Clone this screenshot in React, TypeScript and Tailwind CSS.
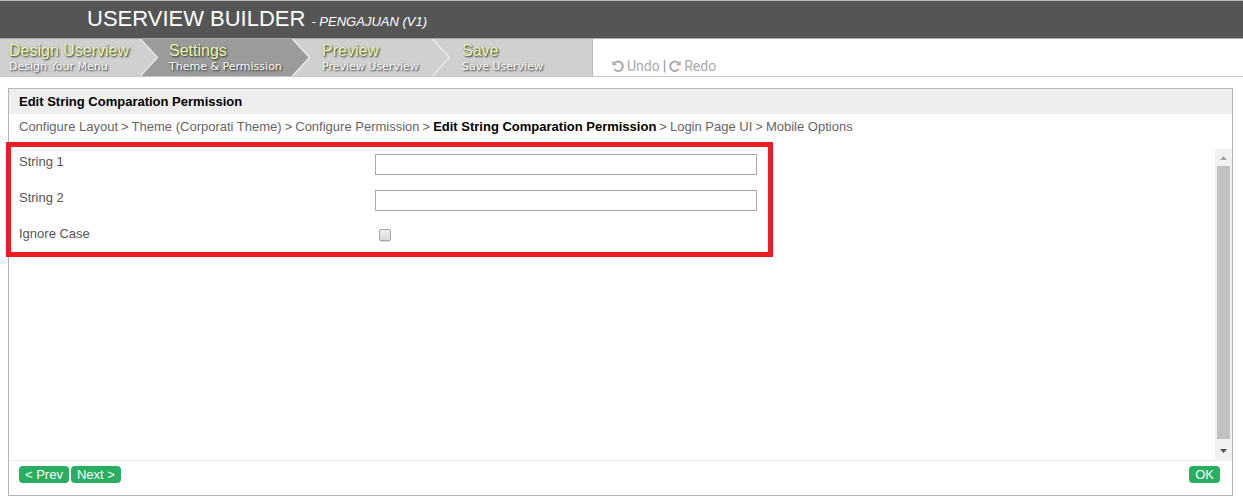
import React from "react";

type Step = { title: string; note: string; size: string; active?: boolean };

const steps: Step[] = [
  { title: "Design Userview", note: "Design Your Menu", size: "w-[140px] pl-[9px]" },
  { title: "Settings", note: "Theme & Permission", size: "w-[152px] pl-[29px]", active: true },
  { title: "Preview", note: "Preview Userview", size: "w-[140px] pl-[30px]" },
  { title: "Save", note: "Save Userview", size: "w-[161px] pl-[30px] border-r border-[#bbb]" },
];

function StepLink({ step, last }: { step: Step; last: boolean }) {
  return (
    <a
      href="#"
      aria-current={step.active ? "step" : undefined}
      className={`relative block h-[37px] shrink-0 pt-[3px] whitespace-nowrap ${step.size} ${
        step.active ? "bg-[#9b9b9b]" : "bg-[#d0d0d0]"
      }`}
    >
      <span className="relative z-20 block text-[16px] leading-[18px] text-[#e8f8a8] [text-shadow:1px_1px_2px_#222]">
        {step.title}
      </span>
      <span className="relative z-20 block font-['DejaVu_Sans',sans-serif] text-[11px] leading-[14px] text-white [text-shadow:1px_1px_2px_#222]">
        {step.note}
      </span>
      {!last && (
        <svg className="absolute top-0 left-full z-10" width="19" height="37" viewBox="0 0 19 37" aria-hidden="true">
          <path d="M0 0 L17 18.5 L0 37 Z" fill={step.active ? "#9b9b9b" : "#d0d0d0"} />
          <path d="M0.5 0 L17.5 18.5 L0.5 37" fill="none" stroke="#ececec" strokeWidth="1.3" />
        </svg>
      )}
    </a>
  );
}

function ArrowIcon({ flip = false }: { flip?: boolean }) {
  return (
    <svg className={flip ? "-scale-x-100" : ""} width="12" height="12" viewBox="0 0 12 12" aria-hidden="true">
      <path d="M2.600 3.200 A4.700 4.700 0 1 1 2.300 9" fill="none" stroke="currentColor" strokeWidth="2" />
      <path d="M0.300 0.700 V5.300 H5 Z" fill="currentColor" />
    </svg>
  );
}

const trail = [
  "Configure Layout",
  "Theme (Corporati Theme)",
  "Configure Permission",
  "Edit String Comparation Permission",
  "Login Page UI",
  "Mobile Options",
];

const buttonStyle = "h-[17px] rounded-[4px] bg-[#27ae60] px-[6px] text-[13px] leading-[17px] text-white";

export default function App() {
  return (
    <div className="flex min-h-screen flex-col bg-white pb-2 font-['Liberation_Sans',Arial,sans-serif] text-[13px] leading-4 text-[#666]">
      <header className="flex h-[39px] items-baseline gap-[6px] border-t border-b border-t-[#bbb] border-b-[#aaa] bg-[#555] pt-1 pl-[87px] text-white">
        <h1 className="text-[22px] leading-[28px]">USERVIEW BUILDER</h1>
        <em className="text-[13px]">- PENGAJUAN (V1)</em>
      </header>

      <div className="flex h-[38px] border-b border-[#c6c6c6]">
        <nav aria-label="Builder steps" className="flex">
          {steps.map((step, i) => (
            <StepLink key={step.title} step={step} last={i === steps.length - 1} />
          ))}
        </nav>
        <div className="flex items-end gap-[3px] pb-[2px] pl-[19px] font-[Roboto,sans-serif] text-[14px] leading-4 text-[#aaa]">
          <button type="button" className="flex items-center gap-[3px]">
            <ArrowIcon />
            Undo
          </button>
          <span className="font-bold text-[#999]">|</span>
          <button type="button" className="flex items-center gap-[3px]">
            <ArrowIcon flip />
            Redo
          </button>
        </div>
      </div>

      <main className="mt-[11px] mr-[10px] ml-2 flex flex-1 flex-col border border-[#b4b4b4]">
        <h2 className="bg-[#eee] pt-[5px] pb-1 pl-[10px] font-bold text-black">Edit String Comparation Permission</h2>
        <nav aria-label="Breadcrumb" className="flex h-[35px] gap-[3px] pt-[5px] pl-[10px] whitespace-nowrap">
          {trail.map((name, i) => (
            <React.Fragment key={name}>
              {i > 0 && <span>&gt;</span>}
              <a href="#" className={i === 3 ? "font-bold text-black" : ""}>
                {name}
              </a>
            </React.Fragment>
          ))}
        </nav>

        <div className="flex flex-1">
          <form className="relative flex-1 pt-[5px] pl-[10px] text-[#555]">
            <div className="flex h-9">
              <label htmlFor="string1" className="w-[356px]">String 1</label>
              <input id="string1" type="text" className="h-[21px] w-[382px] border border-[#a9a9a9] bg-white px-1" />
            </div>
            <div className="flex h-9">
              <label htmlFor="string2" className="w-[356px]">String 2</label>
              <input id="string2" type="text" className="h-[21px] w-[382px] border border-[#a9a9a9] bg-white px-1" />
            </div>
            <div className="flex h-9">
              <label htmlFor="ignoreCase" className="w-[356px]">Ignore Case</label>
              <input
                id="ignoreCase"
                type="checkbox"
                className="mt-[3px] ml-1 size-3 appearance-none rounded-[2px] border border-[#a6a6a6] bg-linear-to-b from-[#eee] to-[#dcdcdc] shadow-[0_1px_1px_#ddd] checked:bg-[#777]"
              />
            </div>
            <div className="pointer-events-none absolute -top-[7px] -left-[3px] h-[115px] w-[767px] border-[5px] border-[#ed1c24]" />
          </form>
          <div className="flex w-[17px] flex-col items-center bg-[#f1f1f1]" aria-hidden="true">
            <svg width="17" height="17" viewBox="0 0 17 17">
              <path d="M8.500 7 L12 11 H5 Z" fill="#a3a3a3" />
            </svg>
            <div className="w-[13px] flex-1 bg-[#c1c1c1]" />
            <svg width="17" height="21" viewBox="0 0 17 21">
              <path d="M8.500 14 L12 10 H5 Z" fill="#505050" />
            </svg>
          </div>
        </div>

        <footer className="flex h-[35px] items-start gap-[2px] border-t border-[#eee] pt-[5px] pr-3 pl-[10px]">
          <button type="button" className={buttonStyle}>&lt; Prev</button>
          <button type="button" className={buttonStyle}>Next &gt;</button>
          <button type="button" className={`ml-auto ${buttonStyle}`}>OK</button>
        </footer>
      </main>
    </div>
  );
}
